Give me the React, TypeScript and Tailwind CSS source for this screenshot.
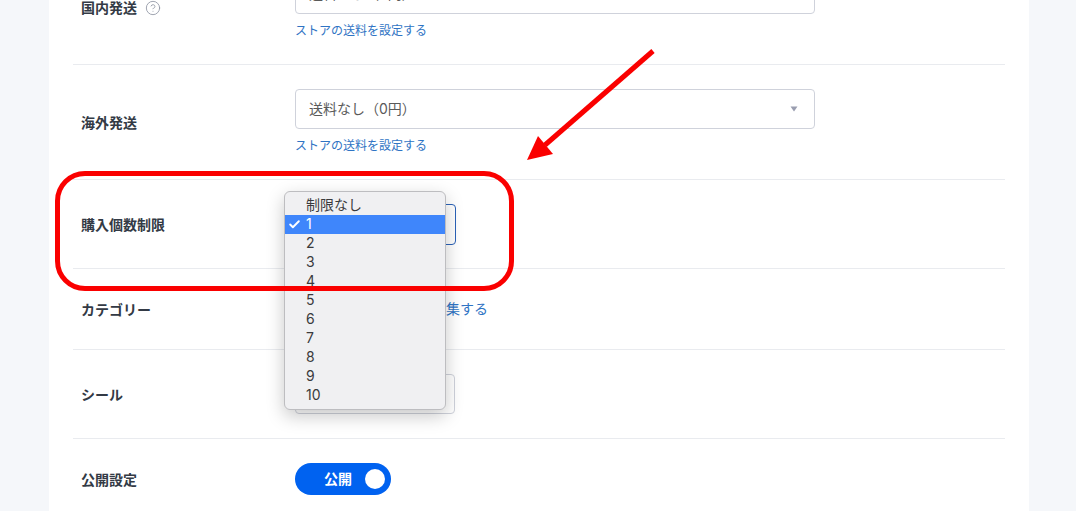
import { Check, CircleHelp } from "lucide-react";

const FONT = "font-['Inter','Noto_Sans_CJK_JP',sans-serif]";
const OPTIONS = ["制限なし", "1", "2", "3", "4", "5", "6", "7", "8", "9", "10"];

function Caret() {
  return (
    <svg width="10" height="6" viewBox="0 0 10 6" className="shrink-0">
      <path d="M1.5 0.5h7L5 5.5z" fill="#9a9eb0" />
    </svg>
  );
}

function ShippingSelect({ text }: { text: string }) {
  return (
    <div className="w-[520px] h-10 flex items-center justify-between pl-[13px] pr-[15px] bg-white border border-[#cfd2db] rounded text-sm text-[#5a5a5a]">
      <span>{text}</span>
      <Caret />
    </div>
  );
}

function StoreLink() {
  return (
    <a className="block mt-2 h-[18px] leading-[18px] text-xs text-[#2f74c4]">
      ストアの送料を設定する
    </a>
  );
}

function Row({ label, children, last }: { label: React.ReactNode; children: React.ReactNode; last?: boolean }) {
  return (
    <div className={`flex items-center px-2 ${last ? "pt-6" : "border-b border-[#e9ebef]"}`}>
      <div className="w-[214px] shrink-0 flex items-center gap-2 pt-[2px] text-sm font-bold text-[#333a45]">
        {label}
      </div>
      <div className="flex-1 min-w-0">{children}</div>
    </div>
  );
}

function QuantityPopup() {
  return (
    <div className="absolute left-[-12px] top-[-14px] z-10 w-[162px] py-1 bg-[#f0f0f2] border border-[#bdbdc0] rounded-md shadow-[0_6px_18px_rgba(0,0,0,0.22)] text-sm text-[#3a3a3c]">
      {OPTIONS.map((opt) => (
        <div
          key={opt}
          className={`relative h-[19px] leading-[18px] pl-[21px] ${opt === "1" ? "bg-[#3f86fb] text-white" : ""}`}
        >
          {opt === "1" && (
            <Check size={13} strokeWidth={3.5} className="absolute left-[3px] top-[3px] text-white" />
          )}
          {opt}
        </div>
      ))}
    </div>
  );
}

export default function App() {
  return (
    <div className={`relative h-[511px] overflow-hidden bg-[#f5f7fa] ${FONT}`}>
      <div className="ml-[49px] -mt-[50px] w-[980px] h-[561px] bg-white px-6">
        <Row
          label={
            <>
              国内発送
              <CircleHelp size={16} strokeWidth={1.25} className="text-[#8d93a1]" />
            </>
          }
        >
          <div className="py-6">
            <ShippingSelect text="送料なし（0円）" />
            <StoreLink />
          </div>
        </Row>

        <Row label="海外発送">
          <div className="py-6">
            <ShippingSelect text="送料なし（0円）" />
            <StoreLink />
          </div>
        </Row>

        <Row label="購入個数制限">
          <div className="pt-6 pb-[23px]">
            <div className="relative w-[161px] h-[41px] bg-white border border-[#2b62b8] rounded">
              <QuantityPopup />
            </div>
          </div>
        </Row>

        <Row label="カテゴリー">
          <div className="py-[30px] h-20">
            <a className="block ml-[53px] leading-5 text-sm text-[#2f74c4]">カテゴリーを編集する</a>
          </div>
        </Row>

        <Row label="シール">
          <div className="py-6">
            <div className="w-40 h-10 bg-white border border-[#cfd2db] rounded" />
          </div>
        </Row>

        <Row label="公開設定" last>
          <div className="w-24 h-8 flex items-center justify-end gap-[13px] pr-[6px] rounded-full bg-[#0062f0]">
            <span className="text-sm font-bold text-white">公開</span>
            <span className="w-5 h-5 rounded-full bg-white" />
          </div>
        </Row>
      </div>

      {/* red annotation */}
      <div className="absolute left-[55px] top-[171px] w-[459px] h-[120px] z-20 border-[5px] border-[#fa0000] rounded-[30px] pointer-events-none" />
      <svg width="1076" height="511" className="absolute inset-0 z-20 pointer-events-none">
        <path d="M653 51 L545 145" stroke="#fa0000" strokeWidth="5" fill="none" />
        <path d="M527 160 L538 136 L553 154 Z" fill="#fa0000" />
      </svg>
    </div>
  );
}
